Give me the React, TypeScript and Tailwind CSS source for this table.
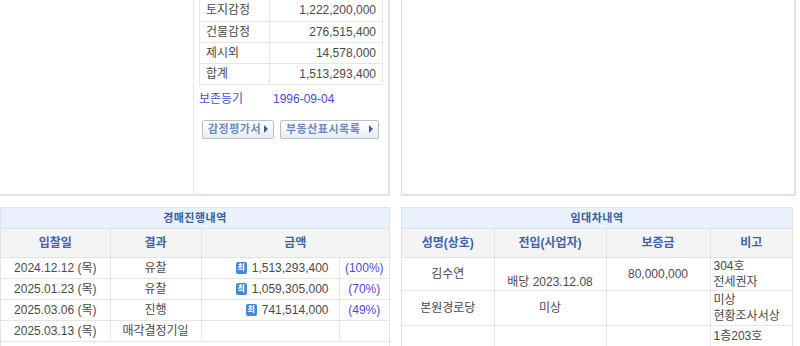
import React from 'react'

const font = { fontFamily: '"Liberation Sans", "Noto Sans CJK KR", sans-serif' }

function Choi() {
  return (
    <span className="inline-flex items-center justify-center w-[11px] h-[12px] rounded-[2px] bg-[#3f8ad8] text-white text-[8px] font-bold leading-none mr-[5px] align-middle">
      최
    </span>
  )
}

function Btn({ label, w }: { label: string; w: string }) {
  return (
    <div
      className={`${w} h-[19px] flex items-center justify-between px-[5px] border border-[#b9c0cc] rounded-[2px] bg-gradient-to-b from-white to-[#e9ecf0] text-[11px] font-bold text-[#6a8cc2] tracking-[0.5px]`}
    >
      <span>{label}</span>
      <span className="w-0 h-0 border-y-[4px] border-y-transparent border-l-[4px] border-l-[#3e5f95]" />
    </div>
  )
}

export default function App() {
  const appraisal = [
    ['토지감정', '1,222,200,000'],
    ['건물감정', '276,515,400'],
    ['제시외', '14,578,000'],
    ['합계', '1,513,293,400'],
  ]
  const auction = [
    ['2024.12.12 (목)', '유찰', '1,513,293,400', '(100%)'],
    ['2025.01.23 (목)', '유찰', '1,059,305,000', '(70%)'],
    ['2025.03.06 (목)', '진행', '741,514,000', '(49%)'],
    ['2025.03.13 (목)', '매각결정기일', '', ''],
  ]

  return (
    <div className="w-[800px] h-[346px] overflow-hidden bg-white text-[12px] text-[#4a4a4a]" style={font}>
      {/* top panels */}
      <div className="flex h-[196px]">
        <div className="w-[390px] flex border-r-2 border-b-2 border-[#dfe2e8]">
          <div className="w-[194px] border-r border-[#e4e6ea]" />
          <div className="flex-1 pl-[5px] pr-[5px]">
            <table className="w-[184px] border-collapse">
              <tbody>
                {appraisal.map(([k, v]) => (
                  <tr key={k} className="h-[21px]">
                    <td className="w-[70px] border border-[#e6e6e6] border-t-0 pl-[6px]">{k}</td>
                    <td className="border border-[#e6e6e6] border-t-0 text-right pr-[6px]">{v}</td>
                  </tr>
                ))}
              </tbody>
            </table>
            <div className="flex mt-[6px] text-[#4a4ad8] h-[16px] items-center">
              <span className="w-[74px]">보존등기</span>
              <span>1996-09-04</span>
            </div>
            <div className="flex gap-[6px] mt-[13px] pl-[3px]">
              <Btn label="감정평가서" w="w-[72px]" />
              <Btn label="부동산표시목록" w="w-[99px]" />
            </div>
          </div>
        </div>
        <div className="w-[11px]" />
        <div className="w-[395px] border-l border-r-2 border-b-2 border-[#dfe2e8]" />
      </div>

      {/* bottom tables */}
      <div className="flex mt-[11px]">
        <div className="w-[390px] border-t border-l border-r border-[#e0e3e8]">
          <div className="h-[21px] bg-[#e8f1fc] border-b border-[#dfe3ea] flex items-center justify-center text-[11px] font-bold text-[#3e5f9c] tracking-[0.5px]">
            경매진행내역
          </div>
          <table className="w-full border-collapse table-fixed">
            <colgroup>
              <col className="w-[109px]" />
              <col className="w-[91px]" />
              <col className="w-[138px]" />
              <col />
            </colgroup>
            <thead>
              <tr className="h-[28px] bg-[#f4f4f4] text-[#3e63a8] font-bold">
                <th className="border-r border-b border-[#e2e2e2]">입찰일</th>
                <th className="border-r border-b border-[#e2e2e2]">결과</th>
                <th className="border-b border-[#e2e2e2]" colSpan={2}>금액</th>
              </tr>
            </thead>
            <tbody>
              {auction.map(([d, r, a, p]) => (
                <tr key={d} className="h-[21px]">
                  <td className="border-r border-b border-[#e6e6e6] text-center">{d}</td>
                  <td className="border-r border-b border-[#e6e6e6] text-center">{r}</td>
                  <td className="border-r border-b border-[#e6e6e6] text-right pr-[10px] whitespace-nowrap">
                    {a && <Choi />}
                    {a}
                  </td>
                  <td className="border-b border-[#e6e6e6] text-center text-[#4a4ad8]">{p}</td>
                </tr>
              ))}
            </tbody>
          </table>
        </div>
        <div className="w-[11px]" />
        <div className="w-[392px] border-t border-l border-r border-[#e0e3e8]">
          <div className="h-[21px] bg-[#e8f1fc] border-b border-[#dfe3ea] flex items-center justify-center text-[11px] font-bold text-[#3e5f9c] tracking-[0.5px]">
            임대차내역
          </div>
          <table className="w-full border-collapse table-fixed">
            <colgroup>
              <col className="w-[92px]" />
              <col className="w-[112px]" />
              <col className="w-[104px]" />
              <col />
            </colgroup>
            <thead>
              <tr className="h-[28px] bg-[#f4f4f4] text-[#3e63a8] font-bold">
                <th className="border-r border-b border-[#e2e2e2]">성명(상호)</th>
                <th className="border-r border-b border-[#e2e2e2]">전입(사업자)</th>
                <th className="border-r border-b border-[#e2e2e2]">보증금</th>
                <th className="border-b border-[#e2e2e2]">비고</th>
              </tr>
            </thead>
            <tbody className="leading-[16px]">
              <tr className="h-[33px]">
                <td className="border-r border-b border-[#e6e6e6] text-center">김수연</td>
                <td className="border-r border-b border-[#e6e6e6] text-center">
                  <div className="h-[16px]" />
                  <div>배당 2023.12.08</div>
                </td>
                <td className="border-r border-b border-[#e6e6e6] text-center">80,000,000</td>
                <td className="border-b border-[#e6e6e6] pl-[3px]">
                  304호
                  <br />
                  전세권자
                </td>
              </tr>
              <tr className="h-[35px]">
                <td className="border-r border-b border-[#e6e6e6] text-center">본원경로당</td>
                <td className="border-r border-b border-[#e6e6e6] text-center">미상</td>
                <td className="border-r border-b border-[#e6e6e6] text-center"></td>
                <td className="border-b border-[#e6e6e6] pl-[3px] pt-[1px]">
                  미상
                  <br />
                  현황조사서상
                </td>
              </tr>
              <tr className="h-[35px]">
                <td className="border-r border-[#e6e6e6]"></td>
                <td className="border-r border-[#e6e6e6]"></td>
                <td className="border-r border-[#e6e6e6]"></td>
                <td className="pl-[3px] align-top pt-[2px]">1층203호</td>
              </tr>
            </tbody>
          </table>
        </div>
      </div>
    </div>
  )
}
